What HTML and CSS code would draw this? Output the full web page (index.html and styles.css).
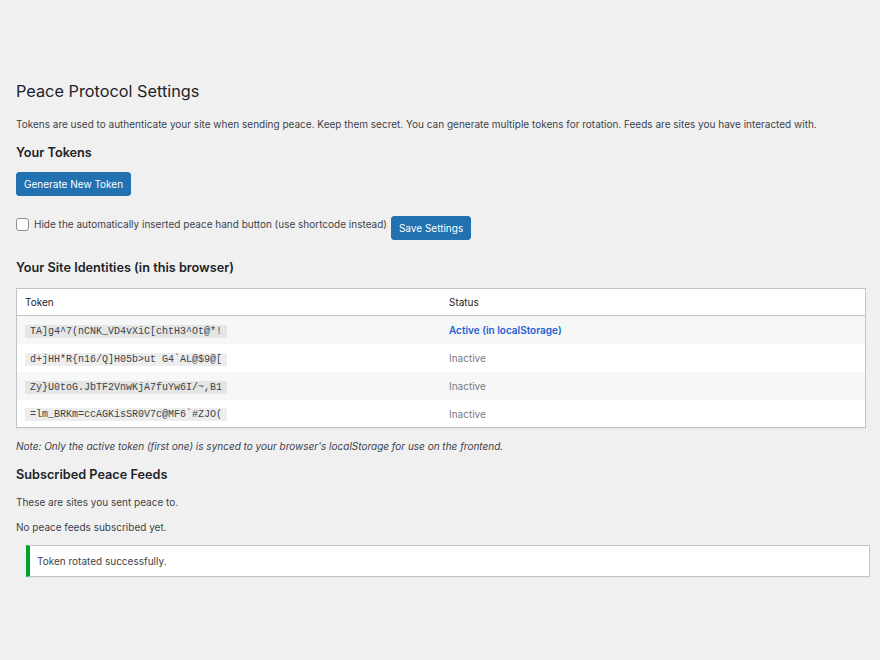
FILE: index.html
```html
<!DOCTYPE html>
<html lang="en">
<head>
    <meta charset="UTF-8">
    <meta name="viewport" content="width=device-width, initial-scale=1.0">
    <title>Peace Protocol Settings</title>
    <link rel="stylesheet" href="styles.css">
</head>
<body>
    <div class="wrap">
        <h1>Peace Protocol Settings</h1>
        <p class="intro">Tokens are used to authenticate your site when sending peace. Keep them secret. You can generate multiple tokens for rotation. Feeds are sites you have interacted with.</p>

        <h2 class="tokens-title">Your Tokens</h2>
        <button class="button-primary generate">Generate New Token</button>

        <form class="settings-row">
            <input type="checkbox" id="hideButton">
            <label for="hideButton">Hide the automatically inserted peace hand button (use shortcode instead)</label>
            <button type="button" class="button-primary">Save Settings</button>
        </form>

        <h2 class="identities-title">Your Site Identities (in this browser)</h2>
        <table class="token-table">
            <thead>
                <tr>
                    <th>Token</th>
                    <th>Status</th>
                </tr>
            </thead>
            <tbody>
                <tr>
                    <td><code>TA]g4^7(nCNK_VD4vXiC[chtH3^Ot@*!</code></td>
                    <td><span class="status-active">Active (in localStorage)</span></td>
                </tr>
                <tr>
                    <td><code>d+jHH*R{n16/Q]H05b&gt;ut G4`AL@$9@[</code></td>
                    <td><span class="status-inactive">Inactive</span></td>
                </tr>
                <tr>
                    <td><code>Zy}U0toG.JbTF2VnwKjA7fuYw6I/~,B1</code></td>
                    <td><span class="status-inactive">Inactive</span></td>
                </tr>
                <tr>
                    <td><code>=lm_BRKm=ccAGKisSR0V7c@MF6`#ZJO(</code></td>
                    <td><span class="status-inactive">Inactive</span></td>
                </tr>
            </tbody>
        </table>
        <p class="note"><em>Note: Only the active token (first one) is synced to your browser's localStorage for use on the frontend.</em></p>

        <h2 class="feeds-title">Subscribed Peace Feeds</h2>
        <p class="feeds-intro">These are sites you sent peace to.</p>
        <p class="feeds-empty">No peace feeds subscribed yet.</p>

        <div class="notice-success">
            <p>Token rotated successfully.</p>
        </div>
    </div>
</body>
</html>
```

FILE: styles.css
```css
body {
    font-family: Inter, 'Liberation Sans', Arial, sans-serif;
    font-size: 10px;
    margin: 0;
    padding: 0;
    background-color: #f0f0f1;
    color: #3c434a;
    line-height: 16px;
    min-height: 100vh;
}
.wrap {
    padding: 80px 14px 0 16px;
}
h1 {
    font-size: 16.3px;
    font-weight: 400;
    line-height: 22px;
    color: #1d2327;
    margin: 0;
}
h2 {
    font-size: 12.7px;
    font-weight: 600;
    line-height: 18px;
    color: #1d2327;
    margin: 0;
}
p {
    margin: 0;
}
.intro {
    margin-top: 14px;
}
.tokens-title {
    margin-top: 12px;
}
.button-primary {
    font-family: inherit;
    font-size: 10px;
    line-height: 22px;
    height: 24px;
    padding: 0 7px;
    background-color: #2271b1;
    border: 1px solid #2271b1;
    border-radius: 3px;
    color: #fff;
    cursor: pointer;
}
.button-primary:hover {
    background-color: #135e96;
}
.generate {
    display: block;
    margin-top: 10px;
}
.settings-row {
    display: flex;
    align-items: flex-start;
    gap: 4px;
    margin-top: 20px;
}
.settings-row input[type="checkbox"] {
    width: 13px;
    height: 13px;
    margin: 2px 1px 0 0;
    appearance: none;
    background: #fff;
    border: 1px solid #8c8f94;
    border-radius: 3px;
}
.settings-row label {
    line-height: 16px;
}
.identities-title {
    margin-top: 19px;
}
.token-table {
    width: 100%;
    margin-top: 11px;
    border-collapse: collapse;
    border: 1px solid #c3c4c7;
    background: #fff;
    box-shadow: 0 1px 1px rgba(0,0,0,0.04);
}
.token-table th,
.token-table td {
    width: 50%;
    text-align: left;
    padding: 0 8px;
    height: 28px;
    font-weight: 400;
}
.token-table th {
    height: 26px;
    color: #1d2327;
    border-bottom: 1px solid #c3c4c7;
}
.token-table tbody tr:nth-child(odd) {
    background-color: #f6f7f7;
}
.token-table tbody tr:last-child td {
    height: 27px;
}
code {
    font-family: 'Liberation Mono', monospace;
    font-size: 10px;
    line-height: 14px;
    padding: 1px 5px 1px;
    background: rgba(0,0,0,0.07);
    color: #3c434a;
}
.status-active {
    color: #2361d8;
    font-weight: 600;
}
.status-inactive {
    color: #787c82;
}
.note {
    margin-top: 10px;
}
.feeds-title {
    margin-top: 12px;
}
.feeds-intro {
    margin-top: 10px;
}
.feeds-empty {
    margin-top: 9px;
}
.notice-success {
    margin: 10px -4px 0 10px;
    padding: 7px 7px;
    background: #fff;
    border: 1px solid #c3c4c7;
    border-left: 4px solid #00a32a;
    box-shadow: 0 1px 1px rgba(0,0,0,0.04);
}
```
